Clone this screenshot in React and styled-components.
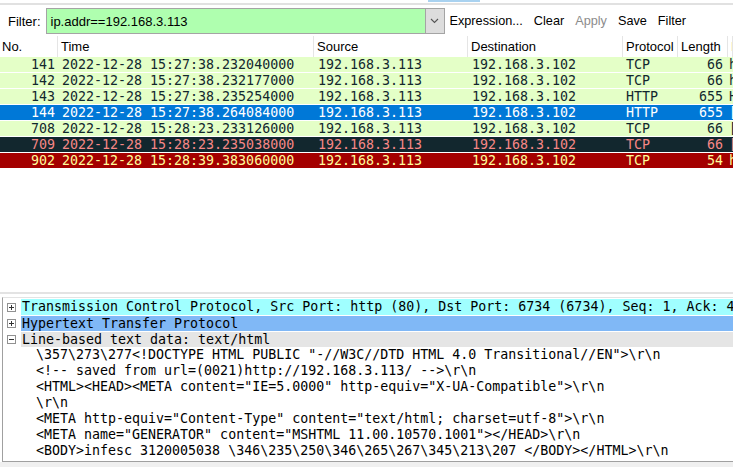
import React from 'react';
import styled, { createGlobalStyle } from 'styled-components';

const GlobalStyle = createGlobalStyle`
  html, body {
    margin: 0;
    padding: 0;
    background: #ffffff;
    overflow: hidden;
  }
  * {
    box-sizing: border-box;
  }
`;

const columns = '58px 256px 154px 155px 55px 50px 1fr';

const packets = [
  { no: 141, time: '2022-12-28 15:27:38.232040000', src: '192.168.3.113', dst: '192.168.3.102', proto: 'TCP', len: 66, info: 'http > 6734 [SYN, ACK]', kind: 'normal' },
  { no: 142, time: '2022-12-28 15:27:38.232177000', src: '192.168.3.113', dst: '192.168.3.102', proto: 'TCP', len: 66, info: 'http > 6734 [ACK]', kind: 'normal' },
  { no: 143, time: '2022-12-28 15:27:38.235254000', src: '192.168.3.113', dst: '192.168.3.102', proto: 'HTTP', len: 655, info: 'HTTP/1.1 200 OK', kind: 'normal' },
  { no: 144, time: '2022-12-28 15:27:38.264084000', src: '192.168.3.113', dst: '192.168.3.102', proto: 'HTTP', len: 655, info: '[TCP Retransmission]', kind: 'selected' },
  { no: 708, time: '2022-12-28 15:28:23.233126000', src: '192.168.3.113', dst: '192.168.3.102', proto: 'TCP', len: 66, info: '[TCP Keep-Alive]', kind: 'normal' },
  { no: 709, time: '2022-12-28 15:28:23.235038000', src: '192.168.3.113', dst: '192.168.3.102', proto: 'TCP', len: 66, info: '[TCP Dup ACK]', kind: 'bad' },
  { no: 902, time: '2022-12-28 15:28:39.383060000', src: '192.168.3.113', dst: '192.168.3.102', proto: 'TCP', len: 54, info: 'http > 6734 [RST]', kind: 'reset' },
];

const rowColors = {
  normal: { bg: '#e4ffc7', fg: '#12272e' },
  selected: { bg: '#0078d7', fg: '#ffffff' },
  bad: { bg: '#12272e', fg: '#f78787' },
  reset: { bg: '#a40000', fg: '#fffc9c' },
};

const htmlLines = [
  '\\357\\273\\277<!DOCTYPE HTML PUBLIC "-//W3C//DTD HTML 4.0 Transitional//EN">\\r\\n',
  '<!-- saved from url=(0021)http://192.168.3.113/ -->\\r\\n',
  '<HTML><HEAD><META content="IE=5.0000" http-equiv="X-UA-Compatible">\\r\\n',
  '\\r\\n',
  '<META http-equiv="Content-Type" content="text/html; charset=utf-8">\\r\\n',
  '<META name="GENERATOR" content="MSHTML 11.00.10570.1001"></HEAD>\\r\\n',
  '<BODY>infesc 3120005038 \\346\\235\\250\\346\\265\\267\\345\\213\\207 </BODY></HTML>\\r\\n',
];

const Window = styled.div`
  width: 733px;
  height: 467px;
  display: flex;
  flex-direction: column;
  background: #ffffff;
  font-family: 'Liberation Sans', Arial, sans-serif;
  overflow: hidden;
`;

const TopStrip = styled.div`
  height: 5px;
  flex: none;
  border-bottom: 2px solid #e1e1e1;
  display: flex;
`;

const TabHint = styled.div`
  width: 52px;
  height: 2px;
  margin-left: 428px;
  background: #a9d2f0;
`;

const FilterBar = styled.div`
  height: 31px;
  flex: none;
  display: flex;
  align-items: center;
  padding: 1px 0 0 8px;
  font-size: 13px;
  color: #000000;
`;

const Label = styled.span`
  margin-right: 5px;
`;

const Combo = styled.div`
  width: 399px;
  height: 26px;
  display: flex;
  border: 1px solid #a4a4a4;
  background: #afffaf;
`;

const ComboInput = styled.div`
  flex: 1;
  padding-left: 4px;
  display: flex;
  align-items: center;
  font-size: 13px;
`;

const ComboButton = styled.div`
  width: 19px;
  display: flex;
  align-items: center;
  justify-content: center;
  background: #dddddd;
  border-left: 1px solid #a4a4a4;
`;

const Tools = styled.div`
  display: flex;
  gap: 11px;
  margin-left: 5px;
  font-size: 12.7px;
`;

const Tool = styled.span`
  color: ${(p) => (p.disabled ? '#8c8c8c' : '#000000')};
`;

const ListHeader = styled.div`
  height: 21px;
  flex: none;
  display: grid;
  grid-template-columns: ${columns};
  font-size: 13px;
  color: #000000;
`;

const HeadCell = styled.div`
  display: flex;
  align-items: center;
  padding-left: ${(p) => p.pad || 3}px;
  border-right: 1px solid #e5e5e5;
  white-space: nowrap;
  overflow: hidden;
`;

const Row = styled.div`
  height: 16px;
  flex: none;
  display: grid;
  grid-template-columns: ${columns};
  background: ${(p) => rowColors[p.kind].bg};
  color: ${(p) => rowColors[p.kind].fg};
  border-bottom: 1px solid #ffffff;
  font-family: 'DejaVu Sans Mono', 'Liberation Mono', monospace;
  font-size: 13.3px;
  line-height: 15px;
`;

const Cell = styled.div`
  white-space: nowrap;
  overflow: hidden;
  text-align: ${(p) => (p.right ? 'right' : 'left')};
  padding-left: ${(p) => (p.right ? 0 : p.pad ?? 4)}px;
  padding-right: ${(p) => (p.right ? p.pad ?? 3 : 0)}px;
`;

const Blank = styled.div`
  flex: 1;
`;

const Splitter = styled.div`
  height: 5px;
  flex: none;
  border-top: 2px solid #e3e3e3;
`;

const DetailPane = styled.div`
  height: 165px;
  flex: none;
  margin-left: 2px;
  border-left: 1px solid #a0a0a0;
  border-top: 1px solid #e3e3e3;
  border-bottom: 1px solid #a0a0a0;
  padding-top: 1px;
  font-family: 'DejaVu Sans Mono', 'Liberation Mono', monospace;
  font-size: 13.3px;
  color: #000000;
  display: flex;
  flex-direction: column;
`;

const TreeRow = styled.div`
  height: 16px;
  flex: none;
  display: flex;
  align-items: center;
  padding-left: 4px;
  border-top: ${(p) => (p.first ? 'none' : '1px solid #ffffff')};
`;

const Expander = styled.div`
  width: 9px;
  height: 9px;
  flex: none;
  border: 1px solid #919191;
  background: #ffffff;
  position: relative;
  margin-right: 5px;

  &::before {
    content: '';
    position: absolute;
    left: 1px;
    top: 3px;
    width: 5px;
    height: 1px;
    background: #333333;
  }

  &::after {
    content: '';
    display: ${(p) => (p.open ? 'none' : 'block')};
    position: absolute;
    left: 3px;
    top: 1px;
    width: 1px;
    height: 5px;
    background: #333333;
  }
`;

const TreeText = styled.div`
  flex: 1;
  height: 100%;
  line-height: 15px;
  padding-left: 1px;
  white-space: nowrap;
  overflow: hidden;
  background: ${(p) => p.bg};
`;

const TextLine = styled.div`
  height: 16px;
  flex: none;
  padding-left: 33px;
  line-height: 15px;
  white-space: pre;
  overflow: hidden;
`;

const BottomBar = styled.div`
  flex: none;
  height: 5px;
  background: #f0f0f0;
`;

const Chevron = () => (
  <svg width="9" height="6" viewBox="0 0 9 6">
    <path d="M1 1 L4.5 4.5 L8 1" fill="none" stroke="#555555" strokeWidth="1.1" />
  </svg>
);

const App = () => (
  <>
    <GlobalStyle />
    <Window>
      <TopStrip>
        <TabHint />
      </TopStrip>
      <FilterBar>
        <Label>Filter:</Label>
        <Combo>
          <ComboInput>ip.addr==192.168.3.113</ComboInput>
          <ComboButton>
            <Chevron />
          </ComboButton>
        </Combo>
        <Tools>
          <Tool>Expression...</Tool>
          <Tool>Clear</Tool>
          <Tool disabled>Apply</Tool>
          <Tool>Save</Tool>
          <Tool>Filter</Tool>
        </Tools>
      </FilterBar>
      <ListHeader>
        <HeadCell pad={2}>No.</HeadCell>
        <HeadCell>Time</HeadCell>
        <HeadCell>Source</HeadCell>
        <HeadCell>Destination</HeadCell>
        <HeadCell>Protocol</HeadCell>
        <HeadCell>Length</HeadCell>
        <HeadCell>Info</HeadCell>
      </ListHeader>
      {packets.map((p) => (
        <Row key={p.no} kind={p.kind}>
          <Cell right>{p.no}</Cell>
          <Cell>{p.time}</Cell>
          <Cell>{p.src}</Cell>
          <Cell>{p.dst}</Cell>
          <Cell pad={3}>{p.proto}</Cell>
          <Cell right pad={5}>{p.len}</Cell>
          <Cell pad={1}>{p.info}</Cell>
        </Row>
      ))}
      <Blank />
      <Splitter />
      <DetailPane>
        <TreeRow first>
          <Expander />
          <TreeText bg="#a0ffff">
            Transmission Control Protocol, Src Port: http (80), Dst Port: 6734 (6734), Seq: 1, Ack: 4
          </TreeText>
        </TreeRow>
        <TreeRow>
          <Expander />
          <TreeText bg="#80b8f6">Hypertext Transfer Protocol</TreeText>
        </TreeRow>
        <TreeRow>
          <Expander open />
          <TreeText bg="#e5e5e5">Line-based text data: text/html</TreeText>
        </TreeRow>
        {htmlLines.map((line, i) => (
          <TextLine key={i}>{line}</TextLine>
        ))}
      </DetailPane>
      <BottomBar />
    </Window>
  </>
);

export default App;
